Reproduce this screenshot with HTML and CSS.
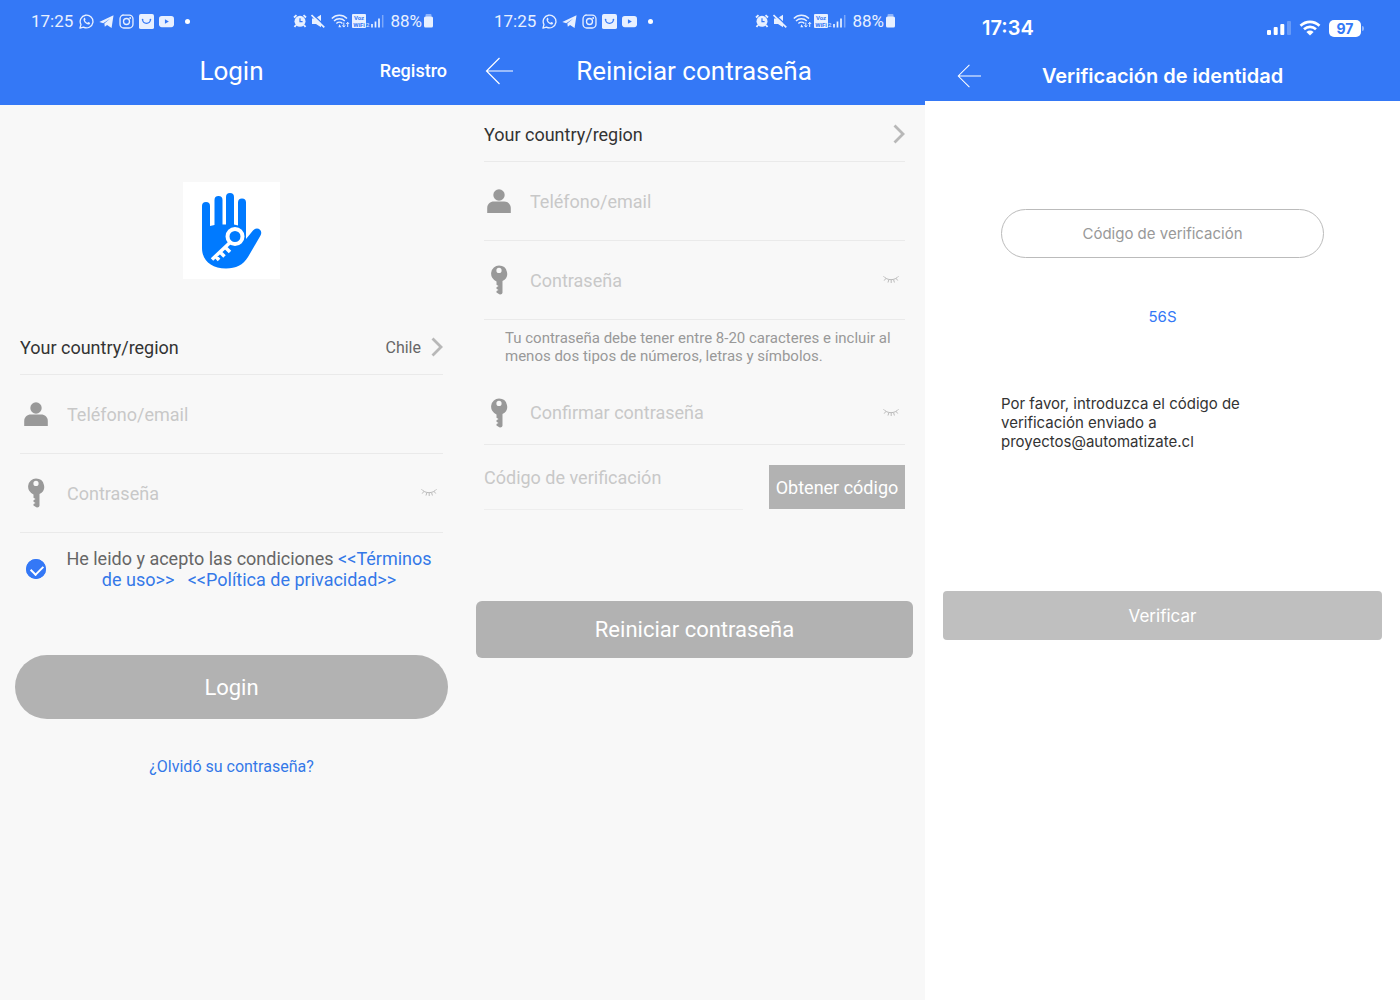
FILE: index.html
```html
<!DOCTYPE html>
<html lang="es">
<head>
    <meta charset="UTF-8" />
    <meta name="viewport" content="width=device-width, initial-scale=1.0" />
    <title>Reiniciar contraseña</title>
    <link rel="stylesheet" href="styles.css">
</head>
<body>
    <svg class="sprite" aria-hidden="true">
        <symbol id="i-whatsapp" viewBox="0 0 16 16">
            <path d="M1 15l1.100-3.700A6.800 6.800 0 1 1 4.800 14z" fill="none" stroke="currentColor" stroke-width="1.400" stroke-linejoin="round"/>
            <path d="M5.400 4.300c.5-.4.9-.2 1.100.2l.5 1.200c.1.4-.5.8-.6 1.100.5 1.200 1.500 2 2.700 2.600.4-.1.7-.8 1.100-.8l1.400.7c.4.3.1 1.100-.3 1.500-2.500 2-8.300-3.500-5.900-6.500z" fill="currentColor"/>
        </symbol>
        <symbol id="i-telegram" viewBox="0 0 16 16">
            <path d="M.3 8.600L15.500 1.200 13.400 15 8.600 11.600 6.200 13.600 5.700 10.200 12 4.900 4.500 9.800z" fill="currentColor"/>
        </symbol>
        <symbol id="i-instagram" viewBox="0 0 16 16">
            <rect x="1.100" y="1.100" width="13.800" height="13.800" rx="4" fill="none" stroke="currentColor" stroke-width="1.400"/>
            <circle cx="8" cy="8" r="3.200" fill="none" stroke="currentColor" stroke-width="1.400"/>
            <circle cx="11.900" cy="4.200" r="1" fill="currentColor"/>
        </symbol>
        <symbol id="i-bag" viewBox="0 0 16 16">
            <rect x="0" y="0" width="16" height="16" rx="2" fill="currentColor"/>
            <path d="M3.800 6.200c.5 5 7.900 5 8.400 0" fill="none" stroke="#3478f6" stroke-width="1.200"/>
            <circle cx="3.800" cy="5.900" r=".9" fill="#3478f6"/>
            <circle cx="12.200" cy="5.900" r=".9" fill="#3478f6"/>
        </symbol>
        <symbol id="i-youtube" viewBox="0 0 16 16">
            <rect x="0" y="2" width="16" height="12" rx="3" fill="currentColor"/>
            <path d="M6.300 5.500v5L10.500 8z" fill="#3478f6"/>
        </symbol>
        <symbol id="i-alarm" viewBox="0 0 14 14">
            <path d="M1 3.500L3.500 1.200M13 3.500L10.500 1.200M3 11l-1.500 2M11 11l1.500 2" stroke="currentColor" stroke-width="1.800"/>
            <circle cx="7" cy="7.300" r="5.500" fill="currentColor"/>
            <path d="M7 4.200v3.400h2.600" fill="none" stroke="#3478f6" stroke-width="1.200"/>
        </symbol>
        <symbol id="i-mute" viewBox="0 0 14 14">
            <path d="M1 4.500h3L10 .8v12.400L5 10H1z" fill="currentColor"/>
            <path d="M1.500 0L14 12" stroke="#3478f6" stroke-width="1.400"/>
            <path d="M.5 1L13.300 13.300" stroke="currentColor" stroke-width="1.700"/>
        </symbol>
        <symbol id="i-wifi-data" viewBox="0 0 19 14">
            <path d="M.8 4.500c4.400-4.300 10.800-4.300 15.200 0M3 7c3-3 7.800-3 10.800 0M5.400 9.400c1.700-1.700 4.300-1.700 6 0" fill="none" stroke="currentColor" stroke-width="1.400"/>
            <path d="M8.400 10.200l2 3h-3z" fill="currentColor"/>
            <path d="M12.800 8.500v4.500M11.400 11.400l1.400 1.700 1.400-1.700M16.700 13V8.400M15.300 10l1.400-1.700L18.100 10" fill="none" stroke="currentColor"/>
        </symbol>
        <symbol id="i-person" viewBox="0 0 24 24">
            <circle cx="12" cy="6" r="5.700" fill="currentColor"/>
            <path d="M.2 24v-5c0-3.800 3-6.400 6.800-6.400h10c3.800 0 6.800 2.600 6.800 6.400v5z" fill="currentColor"/>
        </symbol>
        <symbol id="i-key" viewBox="0 0 18 30">
            <path fill-rule="evenodd" d="M9 .5a8.200 8.200 0 0 1 3.500 15.600V27.500c0 2-3 2.500-4 1.200L6.500 27.500V26l2-1-2-1.200v-1.600L8.500 21l-2-1.200v-3.400A8.200 8.200 0 0 1 9 .5zM9 2.800a2.600 2.600 0 1 0 0 5.200 2.600 2.600 0 0 0 0-5.200z" fill="currentColor"/>
        </symbol>
        <symbol id="i-eye-closed" viewBox="0 0 16 10">
            <path d="M.5 1.200C4 5.800 12 5.800 15.500 1.200M2.700 3.600L1.200 5.600M5.800 4.800L5 7.500M8.200 5v3M10.600 4.700l.8 2.800M13.200 3.500l1.500 2" fill="none" stroke="currentColor"/>
        </symbol>
        <symbol id="i-chevron" viewBox="0 0 12 20">
            <path d="M1.500 1.500L10 10l-8.500 8.500" fill="none" stroke="currentColor" stroke-width="2.800"/>
        </symbol>
        <symbol id="i-back" viewBox="0 0 28 28">
            <path d="M14.500 1L1.500 14l13 13M1.500 14H28" fill="none" stroke="currentColor" stroke-width="1.200"/>
        </symbol>
        <symbol id="i-signal" viewBox="0 0 13 14">
            <path d="M1 10v3.500M4.500 7.500v6M8 4.500v9" stroke="currentColor" stroke-width="1.700"/>
            <path d="M11.700 1v12.500" stroke="currentColor" stroke-width="1.500" opacity=".4"/>
        </symbol>
        <symbol id="i-battery" viewBox="0 0 9 14">
            <rect x="1.500" y="0" width="6" height="3" rx="1" fill="currentColor" opacity=".5"/>
            <rect x="0" y="2.500" width="9" height="11" rx="1.500" fill="currentColor"/>
        </symbol>
    </svg>

    <main class="screens">
        <!-- Login -->
        <section class="screen android">
            <header class="topbar">
                <div class="status">
                    <span class="clock">17:25</span>
                    <svg class="app"><use href="#i-whatsapp"/></svg>
                    <svg class="app"><use href="#i-telegram"/></svg>
                    <svg class="app"><use href="#i-instagram"/></svg>
                    <svg class="app"><use href="#i-bag"/></svg>
                    <svg class="app"><use href="#i-youtube"/></svg>
                    <span class="dot"></span>
                    <span class="system">
                        <svg class="alarm"><use href="#i-alarm"/></svg>
                        <svg class="mute"><use href="#i-mute"/></svg>
                        <svg class="wifi"><use href="#i-wifi-data"/></svg>
                        <span class="volte">
                            <span class="voz"><span>Voz</span><span>WiFi</span></span>
                            <span class="sim">2</span>
                        </span>
                        <svg class="signal"><use href="#i-signal"/></svg>
                        <span class="percent">88%</span>
                        <svg class="battery"><use href="#i-battery"/></svg>
                    </span>
                </div>
                <div class="nav">
                    <h1>Login</h1>
                    <a class="nav-link" href="#registro">Registro</a>
                </div>
            </header>
            <form class="login-form">
                <svg class="logo" viewBox="0 0 97 97" role="img" aria-label="TTLock">
                    <rect width="97" height="97" fill="#fff"/>
                    <path d="M19 24a4 4 0 0 1 8 0v20l4.500-1V18a4 4 0 0 1 8 0v24.500H43V15a4 4 0 0 1 8 0v27.500l4 1V20.500a4 4 0 0 1 8 0V57l7-8.500c4-4.500 10.500-.5 7.500 5L65 75c-5 8-12 11.500-22 11.500C28 86.500 19 78 19 66z" fill="#007aff"/>
                    <circle cx="52" cy="54.500" r="7.500" fill="none" stroke="#fff" stroke-width="4"/>
                    <path d="M46.500 61L29 77.500M42 65l5 5M37 70l4.500 4.500M32.500 74l3.500 4" fill="none" stroke="#fff" stroke-width="3.500"/>
                </svg>
                <button type="button" class="row country">
                    <span>Your country/region</span>
                    <span class="value">Chile</span>
                    <svg class="chevron"><use href="#i-chevron"/></svg>
                </button>
                <div class="row field">
                    <label for="loginUser" aria-label="Teléfono/email"><svg class="person"><use href="#i-person"/></svg></label>
                    <input type="text" id="loginUser" placeholder="Teléfono/email">
                </div>
                <div class="row field">
                    <label for="loginPass" aria-label="Contraseña"><svg class="key"><use href="#i-key"/></svg></label>
                    <input type="password" id="loginPass" placeholder="Contraseña">
                    <button type="button" class="eye" aria-label="Mostrar contraseña"><svg><use href="#i-eye-closed"/></svg></button>
                </div>
                <div class="terms">
                    <input type="checkbox" id="terms" checked>
                    <label for="terms">He leido y acepto las condiciones <a href="#terminos">&lt;&lt;Términos de uso&gt;&gt;</a> &nbsp; <a href="#privacidad">&lt;&lt;Política de privacidad&gt;&gt;</a></label>
                </div>
                <button type="button" class="btn btn-login">Login</button>
                <a class="forgot" href="#reiniciar">¿Olvidó su contraseña?</a>
            </form>
        </section>

        <!-- Reiniciar contraseña -->
        <section class="screen android">
            <header class="topbar">
                <div class="status">
                    <span class="clock">17:25</span>
                    <svg class="app"><use href="#i-whatsapp"/></svg>
                    <svg class="app"><use href="#i-telegram"/></svg>
                    <svg class="app"><use href="#i-instagram"/></svg>
                    <svg class="app"><use href="#i-bag"/></svg>
                    <svg class="app"><use href="#i-youtube"/></svg>
                    <span class="dot"></span>
                    <span class="system">
                        <svg class="alarm"><use href="#i-alarm"/></svg>
                        <svg class="mute"><use href="#i-mute"/></svg>
                        <svg class="wifi"><use href="#i-wifi-data"/></svg>
                        <span class="volte">
                            <span class="voz"><span>Voz</span><span>WiFi</span></span>
                            <span class="sim">2</span>
                        </span>
                        <svg class="signal"><use href="#i-signal"/></svg>
                        <span class="percent">88%</span>
                        <svg class="battery"><use href="#i-battery"/></svg>
                    </span>
                </div>
                <div class="nav">
                    <button type="button" class="back" aria-label="Volver"><svg><use href="#i-back"/></svg></button>
                    <h1>Reiniciar contraseña</h1>
                </div>
            </header>
            <form class="reset-form">
                <button type="button" class="row country">
                    <span>Your country/region</span>
                    <svg class="chevron"><use href="#i-chevron"/></svg>
                </button>
                <div class="row field">
                    <label for="resetUser" aria-label="Teléfono/email"><svg class="person"><use href="#i-person"/></svg></label>
                    <input type="text" id="resetUser" placeholder="Teléfono/email">
                </div>
                <div class="row field">
                    <label for="resetPass" aria-label="Contraseña"><svg class="key"><use href="#i-key"/></svg></label>
                    <input type="password" id="resetPass" placeholder="Contraseña">
                    <button type="button" class="eye" aria-label="Mostrar contraseña"><svg><use href="#i-eye-closed"/></svg></button>
                </div>
                <p class="hint">Tu contraseña debe tener entre 8-20 caracteres e incluir al menos dos tipos de números, letras y símbolos.</p>
                <div class="row field confirm">
                    <label for="resetConfirm" aria-label="Confirmar contraseña"><svg class="key"><use href="#i-key"/></svg></label>
                    <input type="password" id="resetConfirm" placeholder="Confirmar contraseña">
                    <button type="button" class="eye" aria-label="Mostrar contraseña"><svg><use href="#i-eye-closed"/></svg></button>
                </div>
                <div class="code">
                    <input type="text" placeholder="Código de verificación" aria-label="Código de verificación">
                    <button type="button" class="btn btn-code">Obtener código</button>
                </div>
                <button type="button" class="btn btn-reset">Reiniciar contraseña</button>
            </form>
        </section>

        <!-- Verificación de identidad -->
        <section class="screen ios">
            <header class="topbar">
                <div class="status">
                    <span class="clock">17:34</span>
                    <svg class="bars" viewBox="0 0 24 16">
                        <rect x="0" y="10" width="4" height="5" rx="1" fill="#fff"/>
                        <rect x="6.700" y="7" width="4" height="8" rx="1" fill="#fff"/>
                        <rect x="13.300" y="4" width="4" height="11" rx="1" fill="#fff"/>
                        <rect x="20" y="1" width="4" height="14" rx="1" fill="#fff" opacity=".25"/>
                    </svg>
                    <svg class="ios-wifi" viewBox="0 0 22 16">
                        <path d="M1.500 5.800c5.400-5.300 13.600-5.300 19 0M5 9.300c3.500-3.300 8.500-3.300 12 0" fill="none" stroke="#fff" stroke-width="2.600"/>
                        <path d="M7.400 11.900c2.200-1.900 5-1.900 7.200 0L11 15.600z" fill="#fff"/>
                    </svg>
                    <span class="charge">97</span>
                </div>
                <div class="nav">
                    <button type="button" class="back" aria-label="Volver"><svg><use href="#i-back"/></svg></button>
                    <h1>Verificación de identidad</h1>
                </div>
            </header>
            <form class="verify-form">
                <input type="text" class="pill" placeholder="Código de verificación" aria-label="Código de verificación">
                <span class="timer">56S</span>
                <p class="message">Por favor, introduzca el código de verificación enviado a proyectos@automatizate.cl</p>
                <button type="button" class="btn btn-verify">Verificar</button>
            </form>
        </section>
    </main>
</body>
</html>
```
FILE: styles.css
```css
* {
    box-sizing: border-box;
}

body {
    margin: 0;
    font-family: Roboto, sans-serif;
    font-size: 18px;
    color: #333;
}

h1, p {
    margin: 0;
}

button, input {
    font: inherit;
    color: inherit;
    background: none;
    border: 0;
    padding: 0;
}

a {
    color: #3478e8;
    text-decoration: none;
}

svg {
    display: block;
    flex: none;
}

.sprite {
    display: none;
}

.screens {
    display: grid;
    grid-template-columns: 463fr 462fr 475fr;
    min-height: 100vh;
}

.screen {
    background: #f8f8f8;
}

/* Barra superior */
.topbar {
    background: #3478f6;
    color: #fff;
    padding-bottom: 6px;
}

.status {
    display: flex;
    align-items: center;
    gap: 5px;
    height: 42px;
    padding: 0 30px;
}

.android .status {
    padding-left: 31px;
    color: #e8f0ff;
    font-size: 17px;
}

.android .clock {
    margin-right: 1px;
}

.app {
    width: 15px;
    height: 15px;
}

.dot {
    width: 5px;
    height: 5px;
    margin-left: 6px;
    border-radius: 50%;
    background: #fff;
}

.system {
    display: flex;
    align-items: center;
    gap: 2px;
    margin-left: auto;
}

.alarm, .mute {
    width: 14px;
    height: 14px;
    margin-right: 2px;
}

.mute {
    margin-right: 4px;
}

.wifi {
    width: 19px;
    height: 14px;
}

.volte {
    display: flex;
}

.voz {
    display: flex;
    flex-direction: column;
    width: 14px;
    height: 14px;
    border-radius: 1px;
    background: #e8f0ff;
    color: #3478f6;
    font-size: 6px;
    font-weight: 700;
    line-height: 7px;
    text-align: center;
}

.sim {
    align-self: flex-end;
    font-size: 6px;
    line-height: 6px;
}

.signal {
    width: 13px;
    height: 14px;
    margin-right: 4px;
}

.battery {
    width: 9px;
    height: 14px;
}

.nav {
    display: grid;
    grid-template-columns: 1fr auto 1fr;
    align-items: center;
    height: 57px;
    padding: 0 16px;
}

.nav h1 {
    grid-column: 2;
    grid-row: 1;
    font-size: 26px;
    font-weight: 400;
}

.nav-link {
    grid-column: 3;
    justify-self: end;
    color: #fff;
    font-weight: 500;
}

.back {
    grid-column: 1;
    grid-row: 1;
    justify-self: start;
    margin-left: 6px;
}

.back svg {
    width: 28px;
    height: 28px;
}

/* Filas del formulario */
form {
    display: flex;
    flex-direction: column;
}

.login-form {
    padding: 0 20px;
}

.reset-form {
    padding: 0 20px 0 21px;
}

.row {
    display: flex;
    align-items: center;
    width: 100%;
    height: 79px;
    border-bottom: 1px solid #eaeaea;
}

.country {
    height: 55px;
    gap: 10px;
    text-align: left;
}

.value {
    margin-left: auto;
    font-size: 16px;
    color: #666;
}

.chevron {
    width: 12px;
    height: 20px;
    color: #b8b8b8;
}

.reset-form .country {
    height: 57px;
    padding-top: 2px;
    justify-content: space-between;
}

.field label {
    display: flex;
    justify-content: center;
    width: 32px;
    margin-right: 15px;
    color: #999;
}

.reset-form .field label {
    width: 30px;
    margin-right: 16px;
}

.field input, .code input {
    flex: 1;
    min-width: 0;
}

input::placeholder {
    color: #c8c8c8;
    opacity: 1;
}

.person {
    width: 24px;
    height: 24px;
}

.key {
    width: 18px;
    height: 30px;
}

.eye {
    padding: 0 6px;
    color: #bbb;
}

.eye svg {
    width: 16px;
    height: 10px;
}

.logo {
    width: 97px;
    height: 97px;
    margin: 77px auto 41px;
}

.terms {
    display: flex;
    align-items: center;
    gap: 20px;
    margin-top: 15px;
    padding: 0 11px 0 6px;
    line-height: 21px;
    color: #666;
}

.terms label {
    flex: 1;
    text-align: center;
}

.terms input {
    appearance: none;
    flex: none;
    width: 20px;
    height: 20px;
    margin: 0;
    border-radius: 50%;
    box-shadow: inset 0 0 0 1px #3478f6;
}

.terms input:checked {
    background: #3478f6;
}

.terms input:checked::before {
    content: "";
    display: block;
    width: 10px;
    height: 6px;
    margin: 6px 5px;
    border-left: 2px solid #fff;
    border-bottom: 2px solid #fff;
    transform: rotate(-45deg);
}

/* Botones */
.btn {
    background: #b2b2b2;
    color: #fff;
}

.btn-login {
    height: 64px;
    margin: 65px -5px 0;
    border-radius: 32px;
    font-size: 22px;
}

.forgot {
    align-self: center;
    margin-top: 38px;
    font-size: 16px;
}

.hint {
    padding: 9px 0 16px 21px;
    font-size: 15px;
    line-height: 18px;
    color: #999;
}

.confirm {
    height: 64px;
}

.code {
    display: flex;
    align-items: flex-start;
    gap: 26px;
    margin-top: 20px;
}

.code input {
    height: 45px;
    padding-bottom: 19px;
    border-bottom: 1px solid #eee;
}

.btn-code {
    width: 136px;
    height: 44px;
}

.btn-reset {
    height: 57px;
    margin: 91px -8px 0;
    border-radius: 6px;
    font-size: 22px;
}

/* iOS */
.ios {
    background: #fff;
    font-family: Inter, sans-serif;
    font-size: 16px;
}

.ios .topbar {
    padding-bottom: 0;
}

.ios .status {
    height: 50px;
    padding: 6px 39px 0 57px;
    gap: 8px;
}

.ios .clock {
    margin-right: auto;
    font-size: 20px;
    font-weight: 600;
}

.bars {
    width: 24px;
    height: 16px;
}

.ios-wifi {
    width: 22px;
    height: 16px;
}

.charge {
    position: relative;
    width: 32px;
    border-radius: 5px;
    background: #fff;
    color: #3478f6;
    font-size: 14px;
    font-weight: 700;
    line-height: 17px;
    text-align: center;
}

.charge::after {
    content: "";
    position: absolute;
    top: 6px;
    right: -3px;
    width: 2px;
    height: 5px;
    border-radius: 0 2px 2px 0;
    background: #8fb5fa;
}

.ios .nav {
    height: 51px;
}

.ios .nav h1 {
    font-size: 20px;
    font-weight: 600;
}

.ios .back {
    margin-left: 16px;
}

.ios .back svg {
    width: 24px;
    height: 24px;
}

.verify-form {
    padding: 108px 18px 0;
}

.pill {
    height: 49px;
    margin: 0 58px;
    border: 1px solid #bbb;
    border-radius: 25px;
    font-size: 15px;
    text-align: center;
}

.pill::placeholder {
    color: #999;
}

.timer {
    margin-top: 49px;
    font-size: 15px;
    line-height: 20px;
    text-align: center;
    color: #3478f6;
}

.message {
    margin: 67px 120px 0 58px;
    font-size: 15px;
    line-height: 19px;
}

.btn-verify {
    height: 49px;
    margin-top: 140px;
    border-radius: 4px;
    background: #bfbfbf;
    font-size: 17px;
}
```
